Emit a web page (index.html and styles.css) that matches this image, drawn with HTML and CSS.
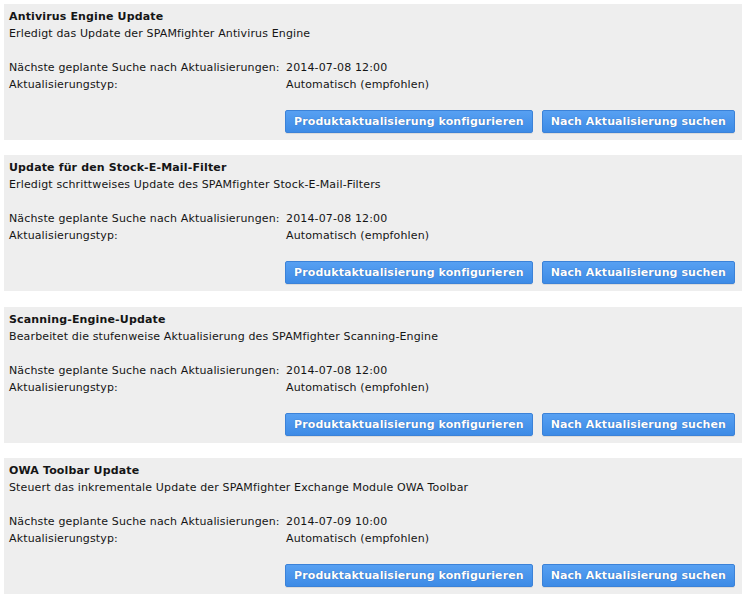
FILE: index.html
```html
<!DOCTYPE html>
<html lang="de">
<head>
<meta charset="utf-8">
<title>Updates</title>
<link rel="stylesheet" href="styles.css">
</head>
<body>
<div class="list">
  <section class="panel">
    <div class="title">Antivirus Engine Update</div>
    <div class="desc">Erledigt das Update der SPAMfighter Antivirus Engine</div>
    <div class="info">
      <span>Nächste geplante Suche nach Aktualisierungen:</span><span>2014-07-08 12:00</span>
      <span>Aktualisierungstyp:</span><span>Automatisch (empfohlen)</span>
    </div>
    <div class="actions">
      <button class="btn">Produktaktualisierung konfigurieren</button>
      <button class="btn">Nach Aktualisierung suchen</button>
    </div>
  </section>
  <section class="panel">
    <div class="title">Update für den Stock-E-Mail-Filter</div>
    <div class="desc">Erledigt schrittweises Update des SPAMfighter Stock-E-Mail-Filters</div>
    <div class="info">
      <span>Nächste geplante Suche nach Aktualisierungen:</span><span>2014-07-08 12:00</span>
      <span>Aktualisierungstyp:</span><span>Automatisch (empfohlen)</span>
    </div>
    <div class="actions">
      <button class="btn">Produktaktualisierung konfigurieren</button>
      <button class="btn">Nach Aktualisierung suchen</button>
    </div>
  </section>
  <section class="panel">
    <div class="title">Scanning-Engine-Update</div>
    <div class="desc">Bearbeitet die stufenweise Aktualisierung des SPAMfighter Scanning-Engine</div>
    <div class="info">
      <span>Nächste geplante Suche nach Aktualisierungen:</span><span>2014-07-08 12:00</span>
      <span>Aktualisierungstyp:</span><span>Automatisch (empfohlen)</span>
    </div>
    <div class="actions">
      <button class="btn">Produktaktualisierung konfigurieren</button>
      <button class="btn">Nach Aktualisierung suchen</button>
    </div>
  </section>
  <section class="panel">
    <div class="title">OWA Toolbar Update</div>
    <div class="desc">Steuert das inkrementale Update der SPAMfighter Exchange Module OWA Toolbar</div>
    <div class="info">
      <span>Nächste geplante Suche nach Aktualisierungen:</span><span>2014-07-09 10:00</span>
      <span>Aktualisierungstyp:</span><span>Automatisch (empfohlen)</span>
    </div>
    <div class="actions">
      <button class="btn">Produktaktualisierung konfigurieren</button>
      <button class="btn">Nach Aktualisierung suchen</button>
    </div>
  </section>
</div>
</body>
</html>
```
FILE: styles.css
```css
html, body {
  margin: 0;
  padding: 0;
  background: #ffffff;
}
body {
  font-family: "DejaVu Sans", Verdana, sans-serif;
  font-size: 11px;
  line-height: 17px;
  letter-spacing: 0.14px;
  color: #151515;
}
.list {
  display: flex;
  flex-direction: column;
  gap: 15.33px;
  padding: 4px 8px 0 4px;
}
.panel {
  background: #eeeeee;
  height: 136px;
  box-sizing: border-box;
  padding: 4px 7px 7px 5px;
  display: flex;
  flex-direction: column;
}
.title {
  font-weight: bold;
  letter-spacing: 0.15px;
}
.desc {
  margin-bottom: 17px;
}
.info {
  display: grid;
  grid-template-columns: 277px 1fr;
}
.actions {
  margin-top: auto;
  display: flex;
  justify-content: flex-end;
  gap: 9px;
}
.btn {
  font-family: "DejaVu Sans", Verdana, sans-serif;
  font-size: 11px;
  font-weight: bold;
  letter-spacing: 0.08px;
  color: #ffffff;
  text-shadow: 0 0 1px rgba(0, 40, 110, 0.6);
  height: 23px;
  padding: 0 8px;
  border: 1px solid #3b82d8;
  border-radius: 2px;
  background: linear-gradient(#57a0f2, #3d8be6);
  box-shadow: 0 1px 0 rgba(0, 0, 0, 0.08);
  cursor: pointer;
}
```
